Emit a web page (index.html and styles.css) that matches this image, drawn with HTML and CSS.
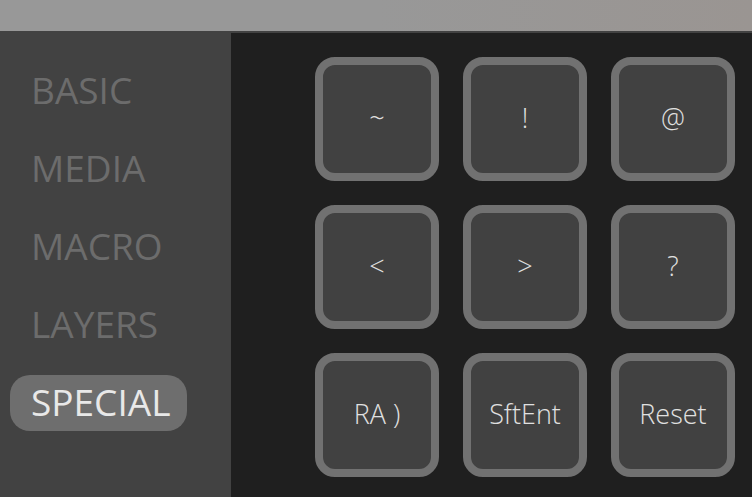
FILE: index.html
```html
<!DOCTYPE html>
<html>
<head>
<meta charset="utf-8">
<link rel="stylesheet" href="styles.css">
</head>
<body>
<div class="topbar"></div>
<div class="body">
  <nav class="sidebar">
    <div class="item">BASIC</div>
    <div class="item">MEDIA</div>
    <div class="item">MACRO</div>
    <div class="item">LAYERS</div>
    <div class="item active">SPECIAL</div>
  </nav>
  <main class="main">
    <div class="grid">
      <div class="key">~</div>
      <div class="key">!</div>
      <div class="key">@</div>
      <div class="key">&lt;</div>
      <div class="key">&gt;</div>
      <div class="key">?</div>
      <div class="key">RA )</div>
      <div class="key">SftEnt</div>
      <div class="key">Reset</div>
    </div>
  </main>
</div>
</body>
</html>
```
FILE: styles.css
```css
html, body {
  margin: 0;
  padding: 0;
  width: 752px;
  height: 497px;
  overflow: hidden;
  font-family: "Open Sans", "Noto Sans", sans-serif;
}
.topbar {
  height: 31px;
  background: linear-gradient(to right, #989898 0%, #989898 50%, #9a9592 100%);
}
.body {
  display: flex;
  height: 466px;
  background: #424242;
}
.sidebar {
  width: 231px;
  flex: none;
  padding: 32px 0 0 10px;
  box-sizing: border-box;
}
.item {
  display: inline-flex;
  align-items: center;
  box-sizing: border-box;
  height: 56px;
  padding: 0 17px 4px 21px;
  margin-bottom: 22px;
  font-size: 37px;
  color: #6c6c6c;
  border-radius: 20px;
}
.item.active {
  background: #6e6e6e;
  color: #e8e8e8;
}
.main {
  flex: 1;
  margin-top: 2px;
  background: #1f1f1f;
  padding: 24px 0 0 84px;
}
.grid {
  display: grid;
  grid-template-columns: repeat(3, 124px);
  grid-auto-rows: 124px;
  gap: 24px;
}
.key {
  box-sizing: border-box;
  border: 8px solid #717171;
  border-radius: 20px;
  background: #414141;
  color: #e0e0e0;
  font-size: 27px;
  font-weight: 300;
  display: flex;
  align-items: center;
  justify-content: center;
  padding-bottom: 4px;
}
```
